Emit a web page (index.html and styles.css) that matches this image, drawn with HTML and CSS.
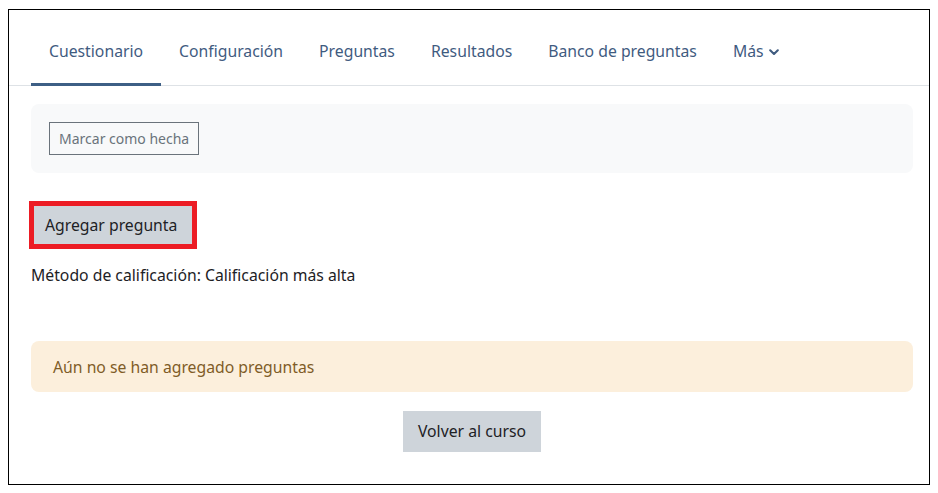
FILE: index.html
```html
<!DOCTYPE html>
<html lang="es">
<head>
<meta charset="utf-8">
<title>Cuestionario</title>
<link rel="stylesheet" href="styles.css">
</head>
<body>
<div class="frame">
  <nav class="tabs">
    <a class="tab active" href="#">Cuestionario</a>
    <a class="tab" href="#">Configuración</a>
    <a class="tab" href="#">Preguntas</a>
    <a class="tab" href="#">Resultados</a>
    <a class="tab" href="#">Banco de preguntas</a>
    <a class="tab" href="#">Más<svg class="chev" viewBox="0 0 10 7" width="10" height="7"><path d="M1.2 1.3 L5 5 L8.8 1.3" fill="none" stroke="currentColor" stroke-width="2.1" stroke-linecap="round" stroke-linejoin="round"/></svg></a>
  </nav>
  <main class="content">
    <div class="completion">
      <button class="btn-outline">Marcar como hecha</button>
    </div>
    <div class="add-row">
      <button class="btn-secondary btn-add">Agregar pregunta</button>
    </div>
    <p class="grading">Método de calificación: Calificación más alta</p>
    <div class="alert">Aún no se han agregado preguntas</div>
    <div class="back-row">
      <button class="btn-secondary btn-back">Volver al curso</button>
    </div>
  </main>
</div>
</body>
</html>
```
FILE: styles.css
```css
* { box-sizing: border-box; }
html, body { margin: 0; padding: 0; background: #fff; }
body {
  font-family: "Noto Sans", "Open Sans", sans-serif;
  font-size: 15.75px;
  line-height: 25px;
  color: #1d2125;
}
.frame {
  margin: 9px 0 0 8px;
  width: 922px;
  height: 476px;
  border: 1px solid #000;
  background: #fff;
}
.tabs {
  display: flex;
  height: 76px;
  padding-left: 22px;
  border-bottom: 1px solid #dee2e6;
}
.tab {
  display: flex;
  align-items: flex-start;
  padding: 29px 18px 0;
  height: 76px;
  margin-bottom: -1px;
  color: #3f5b7f;
  text-decoration: none;
  border-bottom: 3px solid transparent;
  white-space: nowrap;
}
.tab.active {
  border-bottom-color: #3d5f85;
}
.chev {
  margin: 10px 0 0 5px;
  color: #3f5b7f;
}
.content {
  padding: 18px 16px 0 22px;
}
.completion {
  background: #f8f9fa;
  border-radius: 8px;
  padding: 18px;
  height: 69px;
}
button {
  font-family: inherit;
  cursor: pointer;
}
.btn-outline {
  display: block;
  background: transparent;
  border: 1px solid #6a737b;
  color: #6a737b;
  font-size: 14px;
  line-height: 21px;
  padding: 5px 9px;
  height: 33px;
  border-radius: 0;
}
.add-row {
  margin-top: 30px;
}
.btn-secondary {
  background: #ced4da;
  border: 1px solid #ced4da;
  color: #1d2125;
  font-size: 15.75px;
  line-height: 25px;
  border-radius: 0;
}
.btn-add {
  display: block;
  padding: 8px 17px 8px 13px;
  height: 44px;
  outline: 5px solid #ec1c24;
  outline-offset: -3px;
}
.grading {
  margin: 16px 0 0;
}
.alert {
  margin-top: 53px;
  background: #fcefdc;
  color: #7f5c27;
  border-radius: 8px;
  padding: 14px 22px 12px;
  height: 51px;
}
.back-row {
  display: flex;
  justify-content: center;
  margin-top: 19px;
}
.btn-back {
  padding: 7px 14px;
  height: 41px;
}
```
